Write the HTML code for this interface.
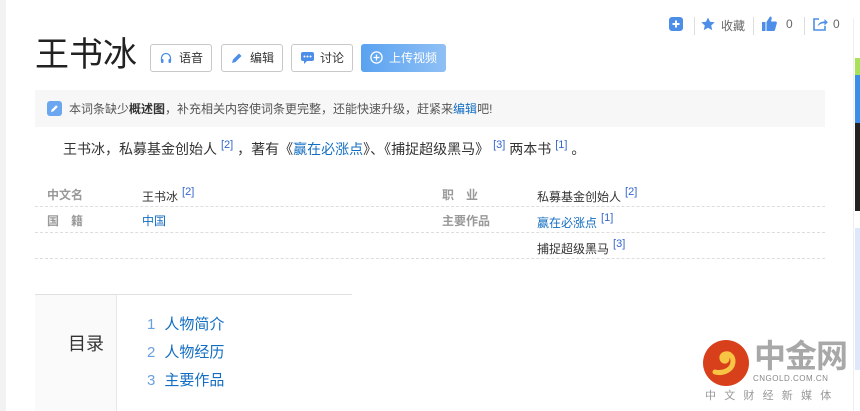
<!DOCTYPE html>
<html><head><meta charset="utf-8"><style>
*{margin:0;padding:0;box-sizing:border-box}
body{width:860px;height:411px;overflow:hidden;background:#fff;font-family:"Liberation Sans","Noto Sans CJK SC",sans-serif;position:relative;color:#333}
.a{position:absolute;white-space:nowrap}
.btn{position:absolute;top:44px;height:28px;border:1px solid #c8c8c8;border-radius:3px;font-size:12px;color:#333;line-height:26px;padding-left:28px}
.btn svg{position:absolute;left:9px;top:7px}
.lbl{color:#999;font-weight:bold;font-size:12px}
.v{font-size:12px;color:#333}
.blue{color:#136ec2}
sup{font-size:11px;color:#3366cc;vertical-align:6px;margin-left:4px}
.dash{position:absolute;left:35px;width:790px;border-top:1px dashed #ddd;height:0}
</style></head><body>
<div class="a" style="left:0;top:0;width:6px;height:411px;background:#f2f2f2"></div>
<svg class="a" style="left:669px;top:17px" width="14" height="14"><rect width="14" height="14" rx="3" fill="#4d8ee8"/><path d="M7 3.5v7M3.5 7h7" stroke="#fff" stroke-width="2"/></svg>
<div class="a" style="left:694px;top:17px;width:1px;height:18px;background:#ddd"></div>
<svg class="a" style="left:701px;top:17px" width="14" height="14"><path d="M7 0.5l2 4.3 4.7.5-3.5 3.2 1 4.6L7 10.8 2.8 13.1l1-4.6L.3 5.3 5 4.8z" fill="#4d8ee8"/></svg>
<div class="a" style="left:721px;top:17px;font-size:12px;color:#666">收藏</div>
<div class="a" style="left:753px;top:17px;width:1px;height:18px;background:#ddd"></div>
<svg class="a" style="left:762px;top:16px" width="15" height="15"><rect x="0" y="6" width="3.5" height="9" fill="#4d8ee8"/><path d="M4.5 6L8 0.5c1.5 0 2 1 1.6 2.5L9 5.5h4.5c1 0 1.6.8 1.3 1.8L13 14c-.2.6-.7 1-1.3 1H4.5z" fill="#4d8ee8"/></svg>
<div class="a" style="left:786px;top:17px;font-size:12px;color:#666">0</div>
<div class="a" style="left:804px;top:17px;width:1px;height:18px;background:#ddd"></div>
<svg class="a" style="left:813px;top:17px" width="15" height="14"><path d="M6 2H1v11h11V9" fill="none" stroke="#4d8ee8" stroke-width="1.6"/><path d="M4.5 9.5c1-4 4-5 7-5V2l3.3 3.3-3.3 3.3V6.3c-3 0-5 1-7 3.2z" fill="#4d8ee8"/></svg>
<div class="a" style="left:833px;top:17px;font-size:12px;color:#666">0</div>
<div class="a" style="left:853px;top:18px;width:1px;height:393px;background:#eee"></div>
<div class="a" style="left:855px;top:58px;width:5px;height:17px;background:#a6e35a"></div>
<div class="a" style="left:855px;top:75px;width:5px;height:48px;background:#3a8fe8"></div>
<div class="a" style="left:855px;top:123px;width:5px;height:88px;background:#222"></div>
<div class="a" style="left:855px;top:228px;width:5px;height:142px;background:#dde9fb"></div>
<div class="a" style="left:35px;top:33px;font-size:34px;color:#222;line-height:44px">王书冰</div>
<div class="btn" style="left:150px;width:62px"><svg width="12" height="12"><path d="M1.5 9V6a4.5 4.5 0 019 0v3" fill="none" stroke="#4d8ee8" stroke-width="1.3"/><rect x="1" y="7" width="2.5" height="4" rx="1" fill="#4d8ee8"/><rect x="8.5" y="7" width="2.5" height="4" rx="1" fill="#4d8ee8"/></svg>语音</div>
<div class="btn" style="left:221px;width:62px"><svg width="12" height="12"><path d="M1 11l1-3.5 6-6 2.5 2.5-6 6z" fill="#4d8ee8"/></svg>编辑</div>
<div class="btn" style="left:291px;width:62px"><svg width="13" height="12"><rect width="13" height="9" rx="2" fill="#4d8ee8"/><path d="M3 9v3l3-3z" fill="#4d8ee8"/><circle cx="3.5" cy="4.5" r="1" fill="#fff"/><circle cx="6.5" cy="4.5" r="1" fill="#fff"/><circle cx="9.5" cy="4.5" r="1" fill="#fff"/></svg>讨论</div>
<div class="btn" style="left:361px;width:85px;border:none;background:linear-gradient(90deg,#5aa2f0,#8fc0f5);color:#fff;line-height:28px"><svg width="13" height="13"><circle cx="6.5" cy="6.5" r="5.6" fill="none" stroke="#fff" stroke-width="1.3"/><path d="M6.5 3.5v6M3.5 6.5h6" stroke="#fff" stroke-width="1.3"/></svg>上传视频</div>
<div class="a" style="left:35px;top:90px;width:790px;height:37px;background:#f7f7f7"></div>
<svg class="a" style="left:47px;top:101px" width="15" height="15"><rect width="15" height="15" rx="3" fill="#6aa7f0"/><path d="M4 11l.6-2.3 4.5-4.5 1.7 1.7-4.5 4.5z" fill="#fff"/></svg>
<div class="a" style="left:69px;top:100px;font-size:12px;color:#555">本词条缺少<b style="color:#333">概述图</b>，补充相关内容使词条更完整，还能快速升级，赶紧来<span class="blue">编辑</span>吧!</div>
<div class="a" style="left:63px;top:139px;font-size:14px;color:#333">王书冰，私募基金创始人<sup>[2]</sup> ，著有《<span class="blue">赢在必涨点</span>》、《捕捉超级黑马》<sup>[3]</sup> 两本书<sup>[1]</sup> 。</div>
<div class="a lbl" style="left:47px;top:186px">中文名</div>
<div class="a v" style="left:142px;top:186px">王书冰<sup>[2]</sup></div>
<div class="a lbl" style="left:442px;top:186px">职　业</div>
<div class="a v" style="left:537px;top:186px">私募基金创始人<sup>[2]</sup></div>
<div class="dash" style="top:206px"></div>
<div class="a lbl" style="left:47px;top:212px">国　籍</div>
<div class="a v blue" style="left:142px;top:212px">中国</div>
<div class="a lbl" style="left:442px;top:212px">主要作品</div>
<div class="a v" style="left:537px;top:212px"><span class="blue">赢在必涨点</span><sup>[1]</sup></div>
<div class="dash" style="top:232px"></div>
<div class="a v" style="left:537px;top:238px">捕捉超级黑马<sup>[3]</sup></div>
<div class="dash" style="top:258px"></div>
<div class="a" style="left:35px;top:294px;width:317px;height:1px;background:#e0e0e0"></div>
<div class="a" style="left:35px;top:295px;width:82px;height:116px;background:#fafafa;border-right:1px solid #e8e8e8"></div>
<div class="a" style="left:68px;top:330px;font-size:18px;color:#333">目录</div>
<div class="a" style="left:147px;top:311px;font-size:15px;line-height:28px"><span style="color:#6aa0e0;margin-right:9px">1</span><span class="blue">人物简介</span><br><span style="color:#6aa0e0;margin-right:9px">2</span><span class="blue">人物经历</span><br><span style="color:#6aa0e0;margin-right:9px">3</span><span class="blue">主要作品</span></div>
<svg class="a" style="left:703px;top:340px" width="46" height="46"><circle cx="23" cy="23" r="23" fill="#d8401c"/><path d="M12 32c8 2 18-2 18-11 0-5-4-8-8-7-4 1-4 6-1 7 3 1 4-3 2-4" fill="none" stroke="#f7c444" stroke-width="5" stroke-linecap="round"/></svg>
<div class="a" style="left:754px;top:338px;font-size:32px;font-weight:bold;color:#a8a8a8;line-height:36px;letter-spacing:-1px">中金网</div>
<div class="a" style="left:753px;top:374px;font-size:8px;color:#888;letter-spacing:0.5px">CNGOLD.COM.CN</div>
<div class="a" style="left:705px;top:387px;font-size:11px;color:#999;letter-spacing:8.2px">中文财经新媒体</div>
</body></html>
